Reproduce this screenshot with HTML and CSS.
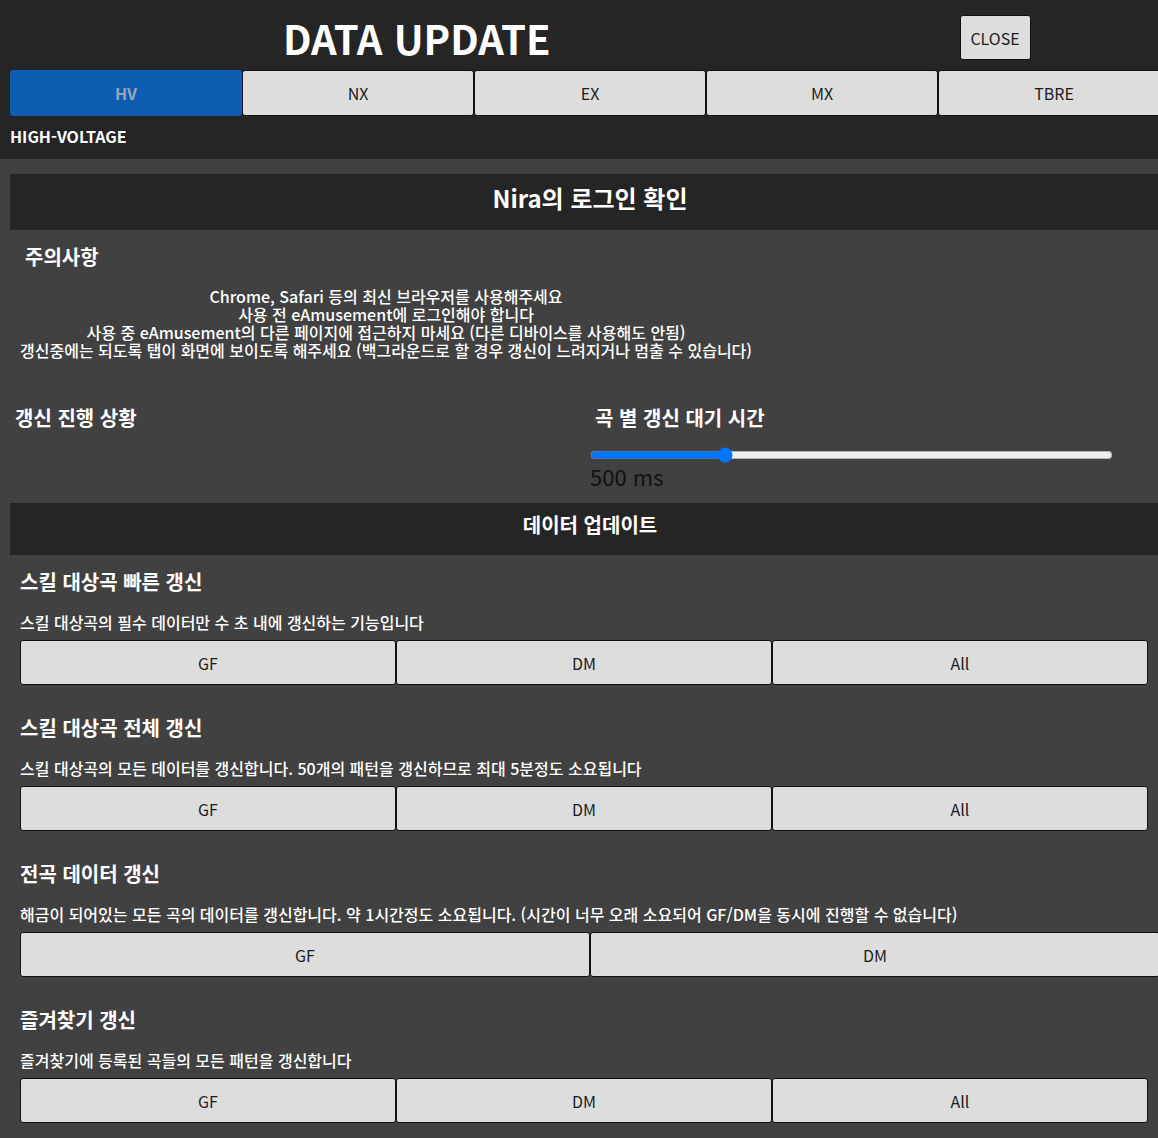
FILE: index.html
```
<!DOCTYPE html>
<html lang="ko">
<head>
<meta charset="utf-8">
<title>DATA UPDATE</title>
<link rel="stylesheet" href="styles.css">
</head>
<body>
<header class="top">
  <div class="wrap">
    <div class="title-row">
      <h1 class="title">DATA UPDATE</h1>
      <button class="btn close">CLOSE</button>
    </div>
    <nav class="tabs">
      <button class="btn tab active">HV</button>
      <button class="btn tab">NX</button>
      <button class="btn tab">EX</button>
      <button class="btn tab">MX</button>
      <button class="btn tab">TBRE</button>
    </nav>
    <div class="version">HIGH-VOLTAGE</div>
  </div>
</header>
<main class="wrap main">
  <div class="band login">Nira의 로그인 확인</div>
  <h2 class="notice-title">주의사항</h2>
  <div class="notes">
    Chrome, Safari 등의 최신 브라우저를 사용해주세요<br>
    사용 전 eAmusement에 로그인해야 합니다<br>
    사용 중 eAmusement의 다른 페이지에 접근하지 마세요 (다른 디바이스를 사용해도 안됨)<br>
    갱신중에는 되도록 탭이 화면에 보이도록 해주세요 (백그라운드로 할 경우 갱신이 느려지거나 멈출 수 있습니다)
  </div>
  <div class="status-row">
    <div class="col">
      <h3 class="col-title">갱신 진행 상황</h3>
    </div>
    <div class="col">
      <h3 class="col-title">곡 별 갱신 대기 시간</h3>
      <input class="slider" type="range" min="0" max="2000" value="500">
      <div class="ms">500 ms</div>
    </div>
  </div>
  <div class="band update">데이터 업데이트</div>
  <section class="sec">
    <h3 class="sec-title">스킬 대상곡 빠른 갱신</h3>
    <p class="desc">스킬 대상곡의 필수 데이터만 수 초 내에 갱신하는 기능입니다</p>
    <div class="btns"><button class="btn b3">GF</button><button class="btn b3">DM</button><button class="btn b3">All</button></div>
  </section>
  <section class="sec">
    <h3 class="sec-title">스킬 대상곡 전체 갱신</h3>
    <p class="desc">스킬 대상곡의 모든 데이터를 갱신합니다. 50개의 패턴을 갱신하므로 최대 5분정도 소요됩니다</p>
    <div class="btns"><button class="btn b3">GF</button><button class="btn b3">DM</button><button class="btn b3">All</button></div>
  </section>
  <section class="sec">
    <h3 class="sec-title">전곡 데이터 갱신</h3>
    <p class="desc">해금이 되어있는 모든 곡의 데이터를 갱신합니다. 약 1시간정도 소요됩니다. (시간이 너무 오래 소요되어 GF/DM을 동시에 진행할 수 없습니다)</p>
    <div class="btns"><button class="btn b2">GF</button><button class="btn b2">DM</button></div>
  </section>
  <section class="sec">
    <h3 class="sec-title">즐겨찾기 갱신</h3>
    <p class="desc">즐겨찾기에 등록된 곡들의 모든 패턴을 갱신합니다</p>
    <div class="btns"><button class="btn b3">GF</button><button class="btn b3">DM</button><button class="btn b3">All</button></div>
  </section>
</main>
</body>
</html>
```
FILE: styles.css
```
html, body {
  margin: 0;
  padding: 0;
  background: #414141;
  overflow: hidden;
  font-family: "Noto Sans CJK KR", "Noto Sans", sans-serif;
  color: #fff;
}
.wrap {
  width: 1160px;
  margin-left: 10px;
}
.top {
  background: #252525;
  height: 159px;
  overflow: hidden;
}
.title-row {
  display: flex;
  align-items: flex-start;
  height: 70px;
}
.title {
  margin: 12px 0 0 273px;
  font-size: 40px;
  line-height: 52px;
  font-weight: 700;
  letter-spacing: 0;
  white-space: nowrap;
}
.btn {
  font-family: "Noto Sans CJK KR", "Noto Sans", sans-serif;
  background: #dddddd;
  color: #1c1c1c;
  border: 1px solid #111;
  border-radius: 3px;
  font-size: 16px;
  padding: 0;
  margin: 0;
  box-sizing: border-box;
}
.close {
  margin: 15px 0 0 409px;
  width: 71px;
  height: 45px;
  flex: none;
}
.tabs {
  display: flex;
}
.tab {
  width: 232px;
  height: 46px;
  flex: none;
}
.tab.active {
  background: #0d5db2;
  border-color: #0d5db2;
  color: #9aa6b5;
  font-weight: 700;
}
.version {
  margin-top: 10px;
  font-size: 16px;
  font-weight: 700;
  line-height: 20px;
}
.main {
  padding-top: 15px;
}
.band {
  background: #252525;
  text-align: center;
  font-weight: 700;
}
.login {
  height: 56px;
  line-height: 48px;
  font-size: 24px;
}
.notice-title {
  margin: 13px 0 0 15px;
  font-size: 20px;
  line-height: 28px;
  font-weight: 700;
}
.notes {
  display: inline-block;
  text-align: center;
  margin: 16px 0 0 10px;
  font-size: 16px;
  line-height: 18px;
  font-weight: 500;
}
.status-row {
  display: flex;
  margin-top: 42px;
  height: 99px;
}
.col {
  width: 580px;
}
.col-title {
  margin: 0 0 0 5px;
  font-size: 20px;
  line-height: 28px;
  font-weight: 700;
}
.slider {
  display: block;
  width: 523px;
  margin: 15px 0 0 0;
  accent-color: #0075ff;
}
.ms {
  font-size: 22px;
  line-height: 24px;
  color: #111;
  margin-top: 1px;
}
.update {
  height: 52px;
  line-height: 44px;
  font-size: 20px;
}
.sec {
  padding: 13px 0 0 10px;
  height: 133px;
}
.sec-title {
  margin: 0;
  font-size: 20px;
  line-height: 28px;
  font-weight: 700;
}
.desc {
  margin: 15px 0 0 0;
  font-size: 16px;
  line-height: 22px;
  font-weight: 500;
}
.btns {
  display: flex;
  width: 1140px;
  margin-top: 7px;
}
.btns .btn {
  height: 45px;
  flex: none;
}
.b3 { width: 376px; }
.b2 { width: 570px; }
```
